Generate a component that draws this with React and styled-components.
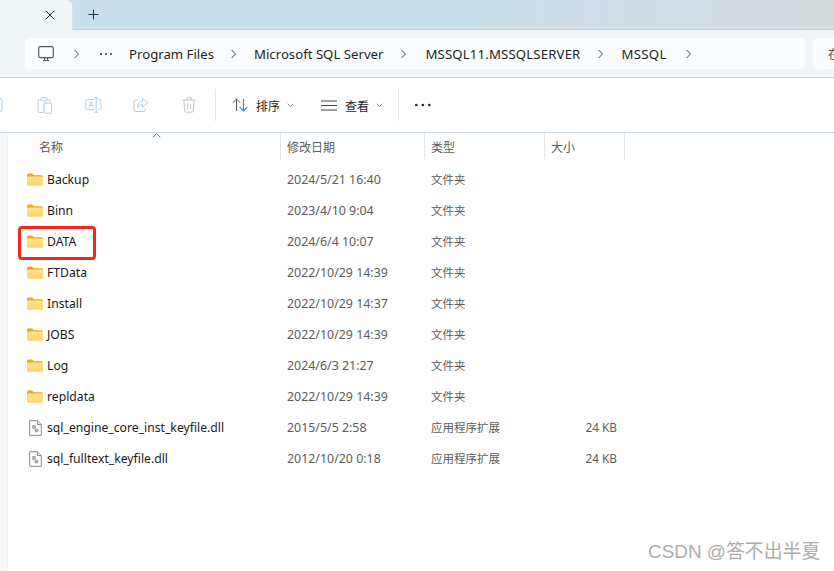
import React from "react";
import styled, { createGlobalStyle } from "styled-components";

const SANS = `"Noto Sans", "Open Sans", "Noto Sans CJK SC", sans-serif`;
const Global = createGlobalStyle`
  html, body { margin: 0; padding: 0; background: #fff; }
  body { font-family: ${SANS}; width: 834px; height: 571px; overflow: hidden; }
  * { box-sizing: border-box; }
`;
const Window = styled.div`position: relative; width: 834px; height: 571px; overflow: hidden; background: #fff;`;

const TabBar = styled.div`
  display: flex; align-items: stretch; height: 30px;
  background: linear-gradient(90deg, #c8dfec 0%, #c9dfeb 55%, #d3dce2 85%, #d6dadd 100%);
  border-bottom: 1px solid #bfd2de;
`;
const ActiveTab = styled.div`
  width: 72px; height: 30px; background: #f0f5f8; border-top-right-radius: 6px;
  display: flex; align-items: center; justify-content: flex-end; padding-right: 17px;
  box-shadow: 1px 0 0 #d3e2ec;
`;
const NewTab = styled.div`margin-left: 16px; width: 12px; display: flex; align-items: center;`;

const AddressRow = styled.div`
  display: flex; gap: 8px; height: 48px; padding: 8px 0 8px 25px;
  background: #f0f5f8; border-bottom: 1px solid #cfdce5;
`;
const Crumbs = styled.div`
  width: 780px; height: 31px; background: #fafcfd; border-radius: 4px;
  display: flex; align-items: center; padding-left: 13px;
  font-size: 13.2px; color: #1f1f1f;
`;
const CrumbIcon = styled.span`display: flex;`;
const Chev = styled.span`display: flex; margin: 0 ${p => p.$r ?? 19}px 0 ${p => p.$l ?? 18}px;`;
const CrumbText = styled.span`
  white-space: nowrap; padding-top: 1px;
  margin-left: ${p => p.$ml ?? 0}px; letter-spacing: ${p => p.$ls ?? 0}px;
`;
const SearchBox = styled.div`
  flex: 1; height: 31px; background: #fafcfd; border-radius: 4px 0 0 4px;
  display: flex; align-items: center; padding-left: 15px; font-size: 12.5px; color: #555; white-space: nowrap; overflow: hidden;
  font-family: "Noto Sans CJK SC", sans-serif;
`;

const Toolbar = styled.div`
  display: flex; align-items: center; height: 54px; margin-left: -27px;
`;
const ToolbarWrap = styled.div`overflow: hidden; height: 55px; border-bottom: 1px solid #c9d8e2;`;
const IconBtn = styled.div`width: 48px; height: 32px; display: flex; align-items: center; justify-content: center;`;
const Divider = styled.div`width: 1px; height: 32px; background: #e7e7e7; margin: 0 ${p => p.$r}px 0 ${p => p.$l}px;`;
const TextBtn = styled.div`
  display: flex; align-items: center; font-size: 12px; color: #1f1f1f;
  margin-right: ${p => p.$mr}px;
`;
const BtnLabel = styled.span`margin: 0 6px 0 8px; width: 25px; font-family: "Noto Sans CJK SC", sans-serif; white-space: nowrap;`;

const Body = styled.div`display: flex; height: 438px;`;
const LeftStrip = styled.div`width: 8px; background: #f8f8f8; border-right: 1px solid #f0f0f0;`;
const List = styled.div`flex: 1; position: relative;`;

const cols = "273px 144px 120px 80px";
const Header = styled.div`
  position: relative; display: grid; grid-template-columns: ${cols}; height: 27px;
  font-size: 12px; color: #5c5c5c; font-family: "Noto Sans CJK SC", sans-serif;
`;
const HeadCell = styled.div`
  display: flex; align-items: center; padding-left: ${p => p.$pl}px;
  border-right: 1px solid #e6e6e6;
`;
const SortCaret = styled.span`position: absolute; left: 144px; top: 0; display: flex;`;

const Rows = styled.div`padding-top: 4px;`;
const Row = styled.div`display: grid; grid-template-columns: ${cols}; height: 31px; align-items: center; font-size: 12.4px; color: #5c5c5c;`;
const NameCell = styled.div`display: flex; align-items: center; padding-left: 19px; color: #1a1a1a; white-space: nowrap; font-size: 12.2px;`;
const NameIcon = styled.span`display: flex; width: 20px; flex: none; padding-left: ${p => p.$pl}px;`;
const DateCell = styled.div`padding-left: 6px; white-space: nowrap;`;
const TypeCell = styled.div`padding: 0 0 2px 6px; font-family: "Noto Sans CJK SC", sans-serif; font-size: 11.5px; white-space: nowrap;`;
const SizeCell = styled.div`text-align: right; padding: 0 8px 2px 0; white-space: nowrap; font-size: 11.8px;`;

const Highlight = styled.div`
  position: absolute; left: 18px; top: 226px; width: 78px; height: 34px;
  border: 3px solid #f2261d; border-radius: 4px; pointer-events: none;
`;
const Watermark = styled.div`
  position: absolute; left: 648px; top: 539px; font-size: 18.9px; line-height: 26px; color: #adadad;
  font-family: "Liberation Sans", "Noto Sans CJK SC", sans-serif; white-space: nowrap;
`;

const Svg = ({ w = 16, h = 16, children }) => (
  <svg width={w} height={h} viewBox={`0 0 ${w} ${h}`} fill="none">{children}</svg>
);
const ChevRight = () => (
  <Svg w={5} h={10}><path d="M0.7 1 L4.4 5 L0.7 9" stroke="#444" strokeWidth="1" /></Svg>
);
const ChevDown = () => (
  <Svg w={7} h={5}><path d="M0.7 0.8 L3.5 3.6 L6.3 0.8" stroke="#8a8a8a" strokeWidth="1" /></Svg>
);
const Close = () => (
  <Svg w={10} h={10}><path d="M0.8 0.8 L9.2 9.2 M9.2 0.8 L0.8 9.2" stroke="#333" strokeWidth="1" /></Svg>
);
const Plus = () => (
  <Svg w={11} h={11}><path d="M5.5 0.5 V10.5 M0.5 5.5 H10.5" stroke="#333" strokeWidth="1" /></Svg>
);
const Monitor = () => (
  <Svg w={16} h={16}>
    <rect x="0.7" y="0.7" width="14.6" height="11" rx="1.6" stroke="#505a60" strokeWidth="1.2" />
    <path d="M5 14.5 H11 M6.5 12 V14 M9.5 12 V14" stroke="#505a60" strokeWidth="1.2" />
  </Svg>
);
const Dots = ({ c = "#333", w = 12, gap = 5, r = 1 }) => (
  <Svg w={w} h={4}>
    {[0, 1, 2].map(i => <circle key={i} cx={r + i * gap} cy={2} r={r} fill={c} />)}
  </Svg>
);
const CopyIcon = () => (
  <Svg w={16} h={16}><rect x="1" y="1.5" width="12" height="13" rx="2" stroke="#a9d0ef" strokeWidth="1" /></Svg>
);
const Clipboard = () => (
  <Svg w={16} h={17}>
    <path d="M4 2.5 H2.5 A1.5 1.5 0 0 0 1 4 V14 A1.5 1.5 0 0 0 2.5 15.5 H6" stroke="#c6c6c6" strokeWidth="1" />
    <path d="M10 2.5 H11.5 A1.5 1.5 0 0 1 13 4 V5" stroke="#c6c6c6" strokeWidth="1" />
    <rect x="4" y="0.8" width="6" height="3" rx="1" stroke="#c6c6c6" strokeWidth="1" />
    <rect x="7" y="6" width="7.5" height="10.2" rx="1.4" stroke="#a9d0ef" strokeWidth="1.1" />
  </Svg>
);
const Rename = () => (
  <Svg w={17} h={16}>
    <path d="M9 2.5 H2.5 A1.7 1.7 0 0 0 0.8 4.2 V11 A1.7 1.7 0 0 0 2.5 12.7 H9" stroke="#c6c6c6" strokeWidth="1" />
    <path d="M13 2.5 H14.3 A1.7 1.7 0 0 1 16 4.2 V11 A1.7 1.7 0 0 1 14.3 12.7 H13" stroke="#c6c6c6" strokeWidth="1" />
    <path d="M3.8 10.5 L6.2 4.7 L8.6 10.5 M4.7 8.5 H7.7" stroke="#a9d0ef" strokeWidth="1" />
    <path d="M9.5 0.6 H13 M11.2 0.6 V15.2 M9.5 15.2 H13" stroke="#a9d0ef" strokeWidth="1.1" />
  </Svg>
);
const Share = () => (
  <Svg w={16} h={16}>
    <path d="M5 3 H2.8 A1.8 1.8 0 0 0 1 4.8 V12.7 A1.8 1.8 0 0 0 2.8 14.5 H10.5 A1.8 1.8 0 0 0 12.3 12.7 V11" stroke="#c6c6c6" strokeWidth="1" />
    <path d="M9.5 1.2 L15 5.8 L9.5 10 V7.6 C7 7.6 5.3 8.6 4.3 10.8 C4.4 7 6.3 4.4 9.5 4 Z" stroke="#a9d0ef" strokeWidth="1" strokeLinejoin="round" />
  </Svg>
);
const Trash = () => (
  <Svg w={14} h={16}>
    <path d="M0.5 3 H13.5 M4.5 3 V2.2 A1.5 1.5 0 0 1 6 0.7 H8 A1.5 1.5 0 0 1 9.5 2.2 V3" stroke="#c6c6c6" strokeWidth="1" />
    <path d="M1.8 3 L2.8 14 A1.3 1.3 0 0 0 4 15.2 H10 A1.3 1.3 0 0 0 11.2 14 L12.2 3" stroke="#c6c6c6" strokeWidth="1" />
    <path d="M5.5 6.5 V11.8 M8.5 6.5 V11.8" stroke="#c6c6c6" strokeWidth="1" />
  </Svg>
);
const SortIcon = () => (
  <Svg w={16} h={14}>
    <path d="M4.5 13 V1 M0.7 4.8 L4.5 1 L8.3 4.8" stroke="#555" strokeWidth="1" />
    <path d="M11.5 1 V13 M7.7 9.2 L11.5 13 L15.3 9.2" stroke="#1f86d6" strokeWidth="1.1" />
  </Svg>
);
const ViewIcon = () => (
  <Svg w={16} h={11}>
    <path d="M0 1 H16 M0 5.5 H16 M0 10 H16" stroke="#444" strokeWidth="1" />
  </Svg>
);
const Folder = () => (
  <Svg w={16} h={13}>
    <path d="M0 2 A1.5 1.5 0 0 1 1.5 0.5 H5.2 L7 2.2 H14.5 A1.5 1.5 0 0 1 16 3.7 V5 H0 Z" fill="#efa90f" />
    <rect x="0" y="3.4" width="16" height="9.4" rx="1.2" fill="url(#fg)" />
    <defs>
      <linearGradient id="fg" x1="0" y1="0" x2="0" y2="1">
        <stop offset="0" stopColor="#ffe58c" />
        <stop offset="1" stopColor="#fdd36c" />
      </linearGradient>
    </defs>
  </Svg>
);
const DllIcon = () => (
  <Svg w={13} h={16}>
    <path d="M0.7 0.7 H8.5 L12.3 4.5 V15.3 H0.7 Z" fill="#fff" stroke="#8a8a8a" strokeWidth="1" />
    <path d="M8.5 0.7 V4.5 H12.3" fill="#eee" stroke="#8a8a8a" strokeWidth="1" />
    <circle cx="5" cy="7" r="2" fill="#8f979c" />
    <circle cx="7.5" cy="10.5" r="2" fill="#a4abb0" />
    <circle cx="5" cy="7" r="0.7" fill="#fff" />
  </Svg>
);
const Caret = () => (
  <Svg w={9} h={5}><path d="M0.7 4.2 L4.5 0.8 L8.3 4.2" stroke="#777" strokeWidth="1" /></Svg>
);

const FOLDER = "文件夹";
const DLL = "应用程序扩展";
const rows = [
  ["Backup", "2024/5/21 16:40", FOLDER, ""],
  ["Binn", "2023/4/10 9:04", FOLDER, ""],
  ["DATA", "2024/6/4 10:07", FOLDER, ""],
  ["FTData", "2022/10/29 14:39", FOLDER, ""],
  ["Install", "2022/10/29 14:37", FOLDER, ""],
  ["JOBS", "2022/10/29 14:39", FOLDER, ""],
  ["Log", "2024/6/3 21:27", FOLDER, ""],
  ["repldata", "2022/10/29 14:39", FOLDER, ""],
  ["sql_engine_core_inst_keyfile.dll", "2015/5/5 2:58", DLL, "24 KB"],
  ["sql_fulltext_keyfile.dll", "2012/10/20 0:18", DLL, "24 KB"],
];

export default function App() {
  return (
    <Window>
      <Global />
      <TabBar>
        <ActiveTab><Close /></ActiveTab>
        <NewTab><Plus /></NewTab>
      </TabBar>
      <AddressRow>
        <Crumbs>
          <CrumbIcon><Monitor /></CrumbIcon>
          <Chev $l={20} $r={21}><ChevRight /></Chev>
          <CrumbIcon><Dots /></CrumbIcon>
          <CrumbText $ml={17}>Program Files</CrumbText>
          <Chev $l={17} $r={18}><ChevRight /></Chev>
          <CrumbText>Microsoft SQL Server</CrumbText>
          <Chev><ChevRight /></Chev>
          <CrumbText $ls={0.15}>MSSQL11.MSSQLSERVER</CrumbText>
          <Chev $r={18}><ChevRight /></Chev>
          <CrumbText $ls={0.3}>MSSQL</CrumbText>
          <Chev $l={19}><ChevRight /></Chev>
        </Crumbs>
        <SearchBox>在</SearchBox>
      </AddressRow>
      <ToolbarWrap>
        <Toolbar>
          <IconBtn><CopyIcon /></IconBtn>
          <IconBtn><Clipboard /></IconBtn>
          <IconBtn><Rename /></IconBtn>
          <IconBtn><Share /></IconBtn>
          <IconBtn><Trash /></IconBtn>
          <Divider $l={2} $r={16} />
          <TextBtn $mr={27}><SortIcon /><BtnLabel>排序</BtnLabel><ChevDown /></TextBtn>
          <TextBtn $mr={15}><ViewIcon /><BtnLabel>查看</BtnLabel><ChevDown /></TextBtn>
          <Divider $l={0} $r={16} />
          <Dots w={16} gap={6.5} r={1.3} c="#222" />
        </Toolbar>
      </ToolbarWrap>
      <Body>
        <LeftStrip />
        <List>
          <Header>
            <HeadCell $pl={31}>名称</HeadCell>
            <HeadCell $pl={6}>修改日期</HeadCell>
            <HeadCell $pl={6}>类型</HeadCell>
            <HeadCell $pl={6}>大小</HeadCell>
            <SortCaret><Caret /></SortCaret>
          </Header>
          <Rows>
            {rows.map(([name, date, type, size]) => (
              <Row key={name}>
                <NameCell>
                  <NameIcon $pl={type === DLL ? 2 : 0}>
                    {type === DLL ? <DllIcon /> : <Folder />}
                  </NameIcon>
                  {name}
                </NameCell>
                <DateCell>{date}</DateCell>
                <TypeCell>{type}</TypeCell>
                <SizeCell>{size}</SizeCell>
              </Row>
            ))}
          </Rows>
        </List>
      </Body>
      <Highlight />
      <Watermark>CSDN @答不出半夏</Watermark>
    </Window>
  );
}
